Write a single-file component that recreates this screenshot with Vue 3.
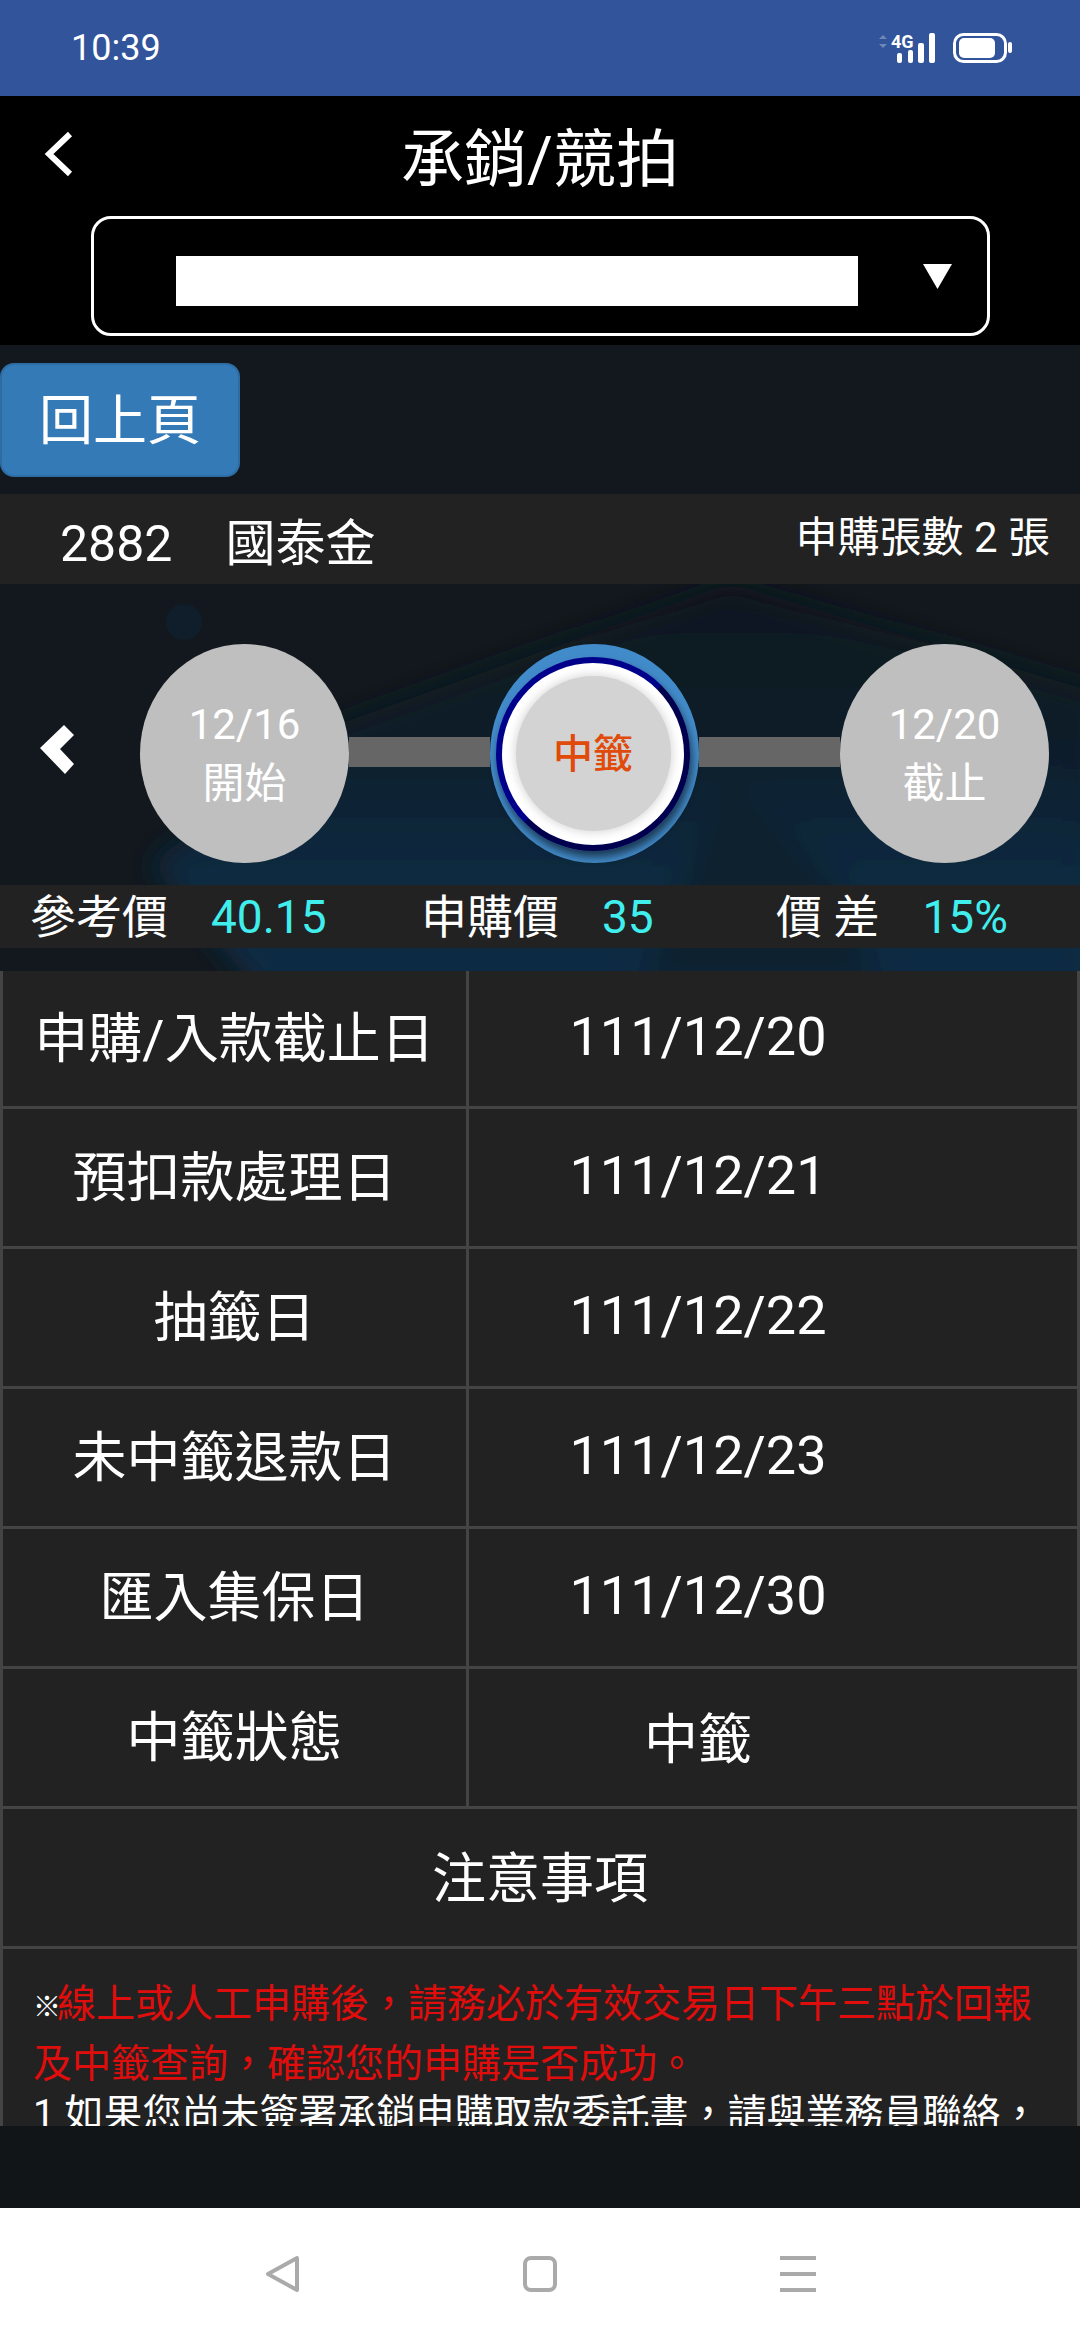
<script setup>
// schedule rows of the table
const rows = [
  { label: '申購/入款截止日', value: '111/12/20' },
  { label: '預扣款處理日', value: '111/12/21' },
  { label: '抽籤日', value: '111/12/22' },
  { label: '未中籤退款日', value: '111/12/23' },
  { label: '匯入集保日', value: '111/12/30' },
  { label: '中籤狀態', value: '中籤' }
]
// price strip under the timeline
const prices = [
  { label: '參考價', value: '40.15' },
  { label: '申購價', value: '35' },
  { label: '價 差', value: '15%' }
]
</script>

<template>
  <div class="phone">
    <!-- status bar -->
    <div class="status">
      <span class="time">10:39</span>
      <svg class="status-icons" width="134" height="32" viewBox="878 32 134 32">
        <path d="M883 35l4 4h-8zM883 48l4-4h-8z" fill="#6f86b8" />
        <text x="891" y="47.5" class="net">4G</text>
        <rect x="897" y="53" width="5" height="10" rx="2" fill="#fff" />
        <rect x="908" y="50" width="5" height="13" rx="2" fill="#fff" />
        <rect x="918" y="43" width="6" height="20" rx="2" fill="#fff" />
        <rect x="929" y="33" width="6" height="30" rx="2" fill="#fff" />
        <rect x="954.5" y="34.5" width="51" height="27" rx="9" fill="none" stroke="#fff" stroke-width="3" />
        <rect x="959" y="38" width="36" height="20" rx="5" fill="#fff" />
        <rect x="1008" y="42" width="4" height="11" rx="2" fill="#fff" />
      </svg>
    </div>

    <!-- title and stock picker -->
    <div class="header">
      <div class="title-row">
        <svg class="back" width="30" height="46" viewBox="0 0 30 46">
          <polyline points="26,3 5,23 26,43" fill="none" stroke="#fff" stroke-width="6" />
        </svg>
        <h1>承銷/競拍</h1>
      </div>
      <div class="picker">
        <div class="picker-value"></div>
        <svg width="29" height="25" viewBox="0 0 29 25"><polygon points="0,0 29,0 14.5,25" fill="#fff" /></svg>
      </div>
    </div>

    <div class="main">
      <button class="btn-back">回上頁</button>

      <div class="stock">
        <div class="stock-name"><span>2882</span><span>國泰金</span></div>
        <div class="stock-qty">申購張數 2 張</div>
      </div>

      <div class="hero">
        <!-- faint background picture -->
        <svg class="hero-bg" width="1080" height="387" viewBox="0 0 1080 387">
          <defs>
            <filter id="soft"><feGaussianBlur stdDeviation="14" /></filter>
            <linearGradient id="sky" x1="0" y1="0" x2="0" y2="1">
              <stop offset="0" stop-color="#11181e" />
              <stop offset="0.35" stop-color="#101c27" />
              <stop offset="0.7" stop-color="#0f2a41" />
              <stop offset="1" stop-color="#0f2c45" />
            </linearGradient>
          </defs>
          <g filter="url(#soft)">
            <polygon points="730,0 1100,110 1100,420 270,420 150,280 340,140" fill="url(#sky)" />
            <polygon points="726,190 840,300 880,400 640,400" fill="#11212f" />
          </g>
          <circle cx="184" cy="38" r="18" fill="#0f1e2a" />
        </svg>

        <div class="timeline">
          <svg class="prev" width="34" height="49" viewBox="0 0 34 49">
            <polygon points="0,23 24,0 34,10 20,24 34,39 25,49" fill="#fff" />
          </svg>
          <div class="step"><span>12/16</span><span>開始</span></div>
          <div class="line"></div>
          <div class="step-now">
            <div class="ring">
              <div class="face">
                <div class="core">中籤</div>
              </div>
            </div>
          </div>
          <div class="line"></div>
          <div class="step"><span>12/20</span><span>截止</span></div>
        </div>

        <div class="prices">
          <div v-for="p in prices" :key="p.label" class="price">
            <span>{{ p.label }}</span><span class="num">{{ p.value }}</span>
          </div>
        </div>
      </div>

      <div class="table">
        <div v-for="r in rows" :key="r.label" class="row">
          <div class="cell-label">{{ r.label }}</div>
          <div class="cell-value">{{ r.value }}</div>
        </div>
        <div class="row-head">注意事項</div>
        <div class="notes">
          <p class="warn"><span class="mark">※</span>線上或人工申購後，請務必於有效交易日下午三點於回報及中籤查詢，確認您的申購是否成功。</p>
          <p class="note">1 如果您尚未簽署承銷申購取款委託書，請與業務員聯絡，</p>
        </div>
      </div>
    </div>

    <div class="footer"></div>

    <!-- android navigation bar -->
    <div class="nav">
      <svg width="36" height="38" viewBox="0 0 36 38">
        <path d="M33 3 L4 19 L33 35 Z" fill="none" stroke="#aaa" stroke-width="4" stroke-linejoin="round" />
      </svg>
      <svg width="36" height="38" viewBox="0 0 36 38">
        <rect x="3" y="3" width="30" height="32" rx="6" fill="none" stroke="#aaa" stroke-width="4" />
      </svg>
      <svg width="36" height="38" viewBox="0 0 36 38">
        <path d="M0 3h36M0 19h36M0 35h36" stroke="#aaa" stroke-width="4" />
      </svg>
    </div>
  </div>
</template>

<style>
html, body { background: #000; }
</style>

<style scoped>
* { box-sizing: border-box; }
.phone {
  width: 1080px;
  height: 2340px;
  display: flex;
  flex-direction: column;
  overflow: hidden;
  color: #fff;
  font-family: Roboto, "Noto Sans CJK TC", sans-serif;
}
.status {
  height: 96px;
  flex: none;
  background: #32549b;
  display: flex;
  align-items: center;
  justify-content: space-between;
  padding: 0 68px 0 71px;
}
.time { font-size: 36px; }
.net { font-size: 18px; font-weight: 700; fill: #fff; font-family: Roboto, sans-serif; }

.header {
  height: 249px;
  flex: none;
  background: #000;
  padding: 0 90px 0 91px;
}
.title-row {
  height: 120px;
  margin: 0 -90px 0 -91px;
  padding-top: 6px;
  display: grid;
  grid-template-columns: 1fr auto 1fr;
  align-items: center;
}
.back { margin-left: 44px; margin-bottom: 10px; }
h1 { margin: 0; font-size: 63px; font-weight: 400; line-height: 1; }
.picker {
  height: 120px;
  border: 3px solid #fff;
  border-radius: 20px;
  display: flex;
  align-items: center;
  padding-left: 82px;
}
.picker-value {
  width: 682px;
  height: 50px;
  margin-top: 10px;
  margin-right: 65px;
  background: #fff;
}

.main {
  flex: 1;
  min-height: 0;
  overflow: hidden;
  background: #12181d;
  padding-top: 18px;
}
.btn-back {
  display: block;
  width: 240px;
  height: 114px;
  margin-bottom: 17px;
  padding: 0 0 8px;
  background: #337ab7;
  border: 2px solid #2e6da4;
  border-radius: 14px;
  color: #fff;
  font: 54px Roboto, "Noto Sans CJK TC", sans-serif;
}
.stock {
  height: 90px;
  background: #222;
  display: flex;
  align-items: center;
  justify-content: space-between;
  padding: 0 30px 0 60px;
}
.stock-name {
  display: flex;
  align-items: center;
  gap: 53px;
  font-size: 50px;
  line-height: 60px;
  padding-top: 10px;
}
.stock-qty { font-size: 42px; line-height: 50px; padding-bottom: 2px; }

.hero { position: relative; height: 387px; padding-top: 60px; }
.hero-bg { position: absolute; left: 0; top: 0; }
.timeline { position: relative; display: flex; align-items: center; height: 219px; }
.prev { margin: 0 66px 8px 40px; flex: none; }
.step {
  width: 209px;
  height: 219px;
  flex: none;
  border-radius: 50%;
  background: #bfbfbf;
  font-size: 42px;
  line-height: 59px;
  display: flex;
  flex-direction: column;
  align-items: center;
  justify-content: center;
}
.line { width: 141px; height: 30px; background: #666; flex: none; margin-bottom: 3px; }
.step-now {
  width: 209px;
  height: 219px;
  flex: none;
  border-radius: 50%;
  background: #428bca;
  display: flex;
  align-items: center;
  padding-left: 6px;
}
.ring {
  width: 194px;
  height: 194px;
  border-radius: 50%;
  background: linear-gradient(135deg, #00008b 50%, #00004f 50%);
  box-shadow: 2px 6px 8px rgba(0, 0, 0, 0.6);
  display: flex;
  align-items: center;
  justify-content: center;
}
.face {
  width: 182px;
  height: 182px;
  border-radius: 50%;
  background: #fff;
  display: flex;
  align-items: center;
  justify-content: center;
}
.core {
  width: 155px;
  height: 155px;
  padding-bottom: 5px;
  border-radius: 50%;
  background: #d3d3d3;
  box-shadow: 0 0 8px 2px #dcdcdc;
  color: #e04a0a;
  font-size: 40px;
  font-weight: 500;
  display: flex;
  align-items: center;
  justify-content: center;
}
.prices {
  position: relative;
  height: 63px;
  margin-top: 22px;
  background: #222;
  display: grid;
  grid-template-columns: 391px 355px 1fr;
  align-items: center;
  padding-left: 30px;
  font-size: 46px;
  line-height: 60px;
}
.price { display: flex; align-items: center; gap: 43px; }
.num { color: #40eeee; }

.table {
  border-left: 3px solid #444;
  border-right: 3px solid #444;
  background: #222;
  font-size: 54px;
}
.row {
  display: grid;
  grid-template-columns: 466px 1fr;
  height: 140px;
  border-bottom: 3px solid #444;
}
.row:first-child { height: 138px; }
.cell-label {
  display: flex;
  align-items: center;
  justify-content: center;
  padding-bottom: 8px;
  border-right: 3px solid #444;
}
.cell-value {
  display: flex;
  align-items: center;
  justify-content: center;
  padding: 0 150px 5px 0;
}
.row-head {
  height: 140px;
  padding-bottom: 6px;
  display: flex;
  align-items: center;
  justify-content: center;
  border-bottom: 3px solid #444;
}
.notes { padding: 27px 30px 0; font-size: 39px; }
.notes p { margin: 0; }
.warn { color: #e00d0d; line-height: 56px; }
.mark { color: #fff; font-size: 28px; font-weight: 700; letter-spacing: -4px; }
.note { line-height: 45px; }

.footer { height: 82px; flex: none; background: #121518; }
.nav {
  height: 132px;
  flex: none;
  background: #fff;
  display: grid;
  grid-template-columns: repeat(3, 258px);
  justify-content: center;
  justify-items: center;
  align-items: center;
}
</style>
